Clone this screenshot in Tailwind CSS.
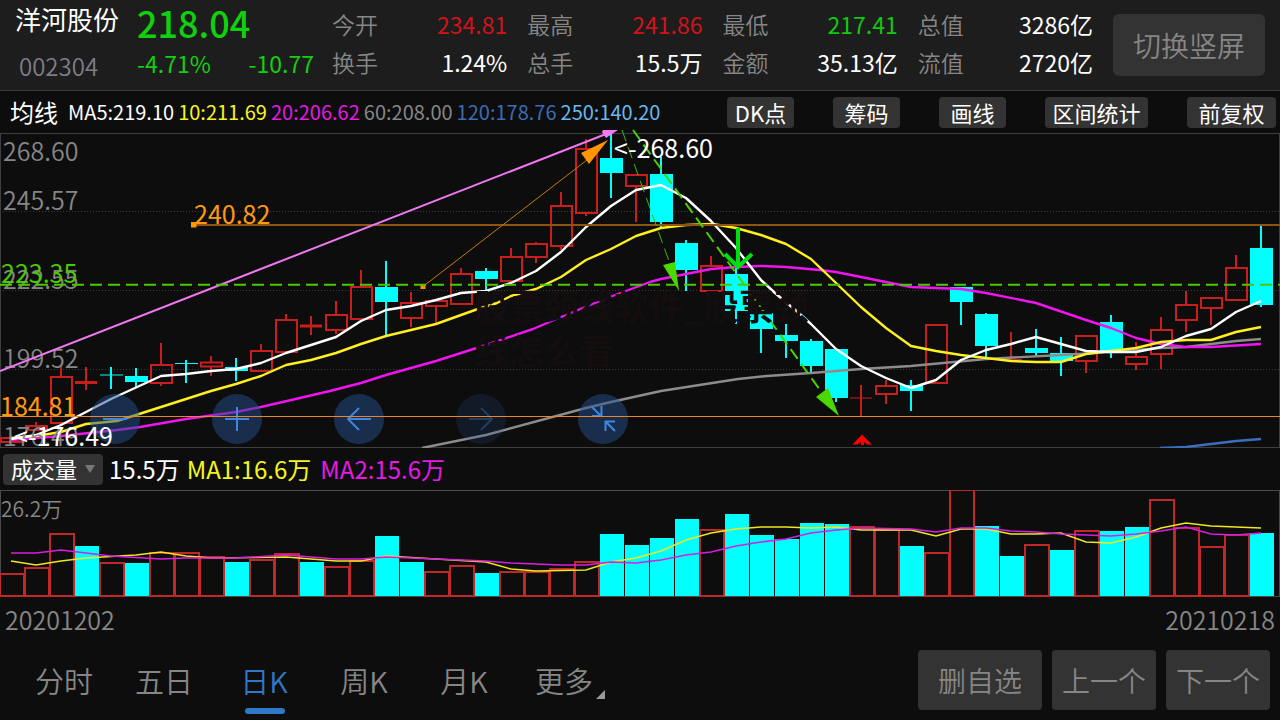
<!DOCTYPE html>
<html lang="zh-CN">
<head>
<meta charset="utf-8">
<meta name="viewport" content="width=device-width, initial-scale=1">
<title>洋河股份 002304</title>
<script src="https://cdn.jsdelivr.net/npm/@tailwindcss/browser@4"></script>
</head>
<body class="min-h-screen bg-[#0d0d0d] font-['Noto_Sans_CJK_SC',sans-serif] text-white overflow-x-hidden">

<header class="flex h-[91px] items-start border-b border-[#3a3a3a] bg-[#1d1d1d] pl-[15px] pr-[15px]">
  <div class="flex w-[122px] flex-col">
    <h1 class="h-[38px] text-[26px] leading-[38px] whitespace-nowrap">洋河股份</h1>
    <p class="pt-2 pl-1 text-2xl leading-10 font-[350] text-[#7d7d88]">002304</p>
  </div>
  <div class="flex w-[177px] flex-col text-[#10d010]">
    <p class="h-11 text-4xl leading-11 font-medium">218.04</p>
    <p class="flex justify-between text-[23px] leading-[38px]"><span>-4.71%</span><span>-10.77</span></p>
  </div>
  <dl class="ml-[18px] mr-5 grid flex-1 grid-cols-4 gap-x-5 pt-[5px] text-[23px] leading-[38px]">
    <div class="flex justify-between"><dt class="font-[350] text-[#868686]">今开</dt><dd class="text-[#d0131b]">234.81</dd></div>
    <div class="flex justify-between"><dt class="font-[350] text-[#868686]">最高</dt><dd class="text-[#d0131b]">241.86</dd></div>
    <div class="flex justify-between"><dt class="font-[350] text-[#868686]">最低</dt><dd class="text-[#10c810]">217.41</dd></div>
    <div class="flex justify-between"><dt class="font-[350] text-[#868686]">总值</dt><dd>3286亿</dd></div>
    <div class="flex justify-between"><dt class="font-[350] text-[#868686]">换手</dt><dd>1.24%</dd></div>
    <div class="flex justify-between"><dt class="font-[350] text-[#868686]">总手</dt><dd>15.5万</dd></div>
    <div class="flex justify-between"><dt class="font-[350] text-[#868686]">金额</dt><dd>35.13亿</dd></div>
    <div class="flex justify-between"><dt class="font-[350] text-[#868686]">流值</dt><dd>2720亿</dd></div>
  </dl>
  <button class="mt-3.5 h-[62px] w-[152px] rounded-md bg-[#333] text-[28px] font-[350] text-[#868686]">切换竖屏</button>
</header>

<main>
  <div class="flex h-[42px] items-center justify-between pl-2.5 pr-1">
    <div class="flex items-center gap-1 text-xl whitespace-nowrap">
      <span class="mr-1.5 text-2xl">均线</span>
      <span>MA5:219.10</span>
      <span class="text-[#f5f51e]">10:211.69</span>
      <span class="text-[#e619e6]">20:206.62</span>
      <span class="text-[#868686]">60:208.00</span>
      <span class="text-[#3c6cb4]">120:178.76</span>
      <span class="text-[#6ab8f0]">250:140.20</span>
    </div>
    <div class="flex gap-[39px] text-[22px] leading-[30px] whitespace-nowrap">
      <button class="h-[31px] w-[67px] rounded bg-[#333]">DK点</button>
      <button class="h-[31px] w-[67px] rounded bg-[#333]">筹码</button>
      <button class="h-[31px] w-[67px] rounded bg-[#333]">画线</button>
      <button class="h-[31px] w-[103px] rounded bg-[#333]">区间统计</button>
      <button class="h-[31px] w-[89px] rounded bg-[#333]">前复权</button>
    </div>
  </div>

  <section class="relative h-[315px] text-[25px] leading-8" aria-label="日K线图">
    <svg id="price" class="absolute inset-0 h-full w-full" viewBox="0 133 1280 315" preserveAspectRatio="none" fill="none">
      <rect x="0.5" y="133.5" width="1279" height="314" stroke="#3f3f3f"/>
      <path d="M0 211.5H1280M0 290.5H1280M0 369.5H1280" stroke="#3c3c3c" stroke-dasharray="1 2"/>
      <g id="candles"></g>
      <g stroke-width="2.4" stroke-linejoin="round">
        <polyline stroke="#8c8c8c" points="422,448 486,435 586,408 611,402 661,391 738,379 767,376 811,373 861,369 911,366 986,359 1061,355 1111,352 1161,348 1186,347 1236,341 1261,339"/>
        <polyline stroke="#3a6fbf" points="1160,448 1186,447 1211,444 1236,441 1261,439"/>
        <polyline stroke="#f015f0" points="11,440 61,436 117,430 140,427 186,419 236,412 261,407 330,391 361,383 386,375 436,361 486,345 533,329 561,317 607,298 650,282 661,279 686,274 711,269 736,267 761,266 786,267 820,270 836,272 886,282 911,287 961,289 986,293 1036,303 1086,320 1111,328 1136,338 1161,344 1186,347 1211,347 1261,344"/>
        <polyline stroke="#fff01e" points="11,438 36,436 61,432 86,424 117,421 136,415 161,407 186,399 211,391 236,384 261,376 286,365 311,360 336,353 361,344 386,336 436,324 475,310 497,303 511,296 536,289 561,277 586,260 611,249 636,236 661,228 686,225 713,224 736,228 761,235 786,244 811,259 836,283 861,307 886,328 911,346 936,351 961,355 986,358 1011,361 1036,362 1061,362 1086,354 1111,351 1136,348 1161,342 1186,340 1211,340 1236,332 1261,327"/>
        <polyline stroke="#fff" points="11,439 36,435 61,425 111,399 161,376 186,374 211,371 236,369 261,363 286,353 336,337 361,321 386,310 411,306 436,300 461,293 486,291 511,283 536,271 561,252 586,227 611,206 636,190 661,185 686,198 711,221 736,248 761,280 775,293 800,314 811,324 836,349 861,366 886,378 911,388 936,380 961,360 986,350 1011,344 1036,337 1061,344 1086,351 1111,352 1136,352 1161,347 1186,336 1211,329 1236,312 1261,301"/>
      </g>
    </svg>

    <p class="absolute top-[1px] left-[3px] font-[350] text-[#868686]">268.60</p>
    <p class="absolute top-[50px] left-[3px] font-[350] text-[#868686]">245.57</p>
    <p class="absolute top-[129px] left-[3px] font-[350] text-[#868686]">222.55</p>
    <p class="absolute top-[208px] left-[3px] font-[350] text-[#868686]">199.52</p>
    <p class="absolute top-[286px] left-[3px] font-[350] text-[#868686]">176.49</p>

    <div class="absolute bottom-1 left-[90px] flex gap-[72px] text-[#3f86e0]">
      <button aria-label="缩小" class="size-[50px] rounded-full bg-[#24508c]/50"><svg viewBox="0 0 50 50" fill="none" stroke="currentColor" stroke-width="2"><path d="M13 25H37"/></svg></button>
      <button aria-label="放大" class="size-[50px] rounded-full bg-[#24508c]/50"><svg viewBox="0 0 50 50" fill="none" stroke="currentColor" stroke-width="2"><path d="M13 25H37M25 13V37"/></svg></button>
      <button aria-label="左移" class="size-[50px] rounded-full bg-[#24508c]/50"><svg viewBox="0 0 50 50" fill="none" stroke="currentColor" stroke-width="2"><path d="M37 25H14M25 14L14 25L25 36"/></svg></button>
      <button aria-label="右移" disabled class="size-[50px] rounded-full bg-[#24508c]/50 opacity-40"><svg viewBox="0 0 50 50" fill="none" stroke="currentColor" stroke-width="2"><path d="M13 25H36M25 14L36 25L25 36"/></svg></button>
      <button aria-label="收起" class="size-[50px] rounded-full bg-[#24508c]/50"><svg viewBox="0 0 50 50" fill="none" stroke="currentColor" stroke-width="2"><path d="M14 13L23 22M23.500 12V22H14M37 37L28 28M27.500 37V27.500H37"/></svg></button>
    </div>

    <svg class="pointer-events-none absolute inset-0 h-full w-full overflow-visible" viewBox="0 133 1280 315" preserveAspectRatio="none" fill="none">
      <path d="M194 225H1280" stroke="#8f5510" stroke-width="2"/>
      <path d="M191 222h5.500v5.500h-5.500zM420.500 284h5v5h-5z" fill="#ff9500"/>
      <path d="M0 416.500H1280" stroke="#e8862a"/>
      <path d="M423 286.500L587 160" stroke="#c97a08"/>
      <path d="M608 140L581 153L589 164Z" fill="#ff9500"/>
      <path d="M0 371L606 134" stroke="#f078f0" stroke-width="2"/>
      <path d="M618 130H603L602 132L606 138Z" fill="#f878f8"/>
      <path d="M0 284.700H1280" stroke="#4bc800" stroke-width="2" stroke-dasharray="12 6"/>
      <path d="M622 130L670 264" stroke="#45b800" stroke-dasharray="12 6"/>
      <path d="M663 265L675 262L679 291ZM816 397L828 388L839 416Z" fill="#4bd800"/>
      <path d="M633 130L820 390" stroke="#4bd000" stroke-width="2" stroke-dasharray="12 6"/>
      <path d="M738 228V266M725 254L738 267L752 254" stroke="#00e010" stroke-width="4"/>
      <path d="M862 434.500L872 444.500H867L864 442V445H861V442L857.500 444.500H852.500Z" fill="#ff0000"/>
    </svg>

    <p class="absolute top-[64px] left-[194px] text-[#ff9a10]">240.82</p>
    <p class="absolute top-[123px] left-px text-[#4bc800]">223.35</p>
    <p class="absolute top-[256px] left-0 text-[#ff9a10]">184.81</p>
    <p class="absolute top-[286px] left-[14px]">&lt;-176.49</p>
    <p class="absolute -top-[2px] left-[614px]">&lt;-268.60</p>
    <p class="absolute top-[149px] left-[474px] w-[336px] text-[35px] leading-[45px] font-bold break-all text-[#140e0e]">股票颈线软件_股票颈线怎么看</p>
  </section>

  <div class="flex h-[42px] items-center pl-[3px] text-2xl whitespace-nowrap">
    <button class="flex h-[31px] w-[100px] items-center gap-2 rounded bg-[#333] pl-2 text-[22px]">成交量<svg class="h-2.5 w-2.5" viewBox="0 0 10 10"><path d="M0 1H10L5 9Z" fill="#777"/></svg></button>
    <span class="ml-1.5">15.5万</span>
    <span class="ml-[7px] text-[#f5f51e]">MA1:16.6万</span>
    <span class="ml-[9px] text-[#e619e6]">MA2:15.6万</span>
  </div>

  <section class="relative h-[107px]" aria-label="成交量">
    <svg class="absolute inset-0 h-full w-full" viewBox="0 490 1280 107" preserveAspectRatio="none" fill="none">
      <rect x="0.5" y="490.5" width="1279" height="106" stroke="#4a4a4a"/>
      <g id="volumes"></g>
      <g stroke-width="1.500">
        <polyline stroke="#f0e81e" points="11,561 36,565 61,561 86,558 136,555 161,552 186,556 211,558 286,557 311,559 336,561 361,561 386,556 436,559 486,562 511,569 536,571 586,570 611,562 636,558 661,551 686,540 711,533 736,529 761,527 786,527 811,528 836,527 861,530 911,530 936,536 961,529 986,529 1011,534 1036,534 1061,533 1086,542 1111,543 1136,537 1161,528 1186,523 1211,526 1261,528"/>
        <polyline stroke="#d81ee0" points="11,553 36,553 61,550 86,553 111,556 161,559 186,558 236,558 286,555 336,559 361,559 386,557 436,559 486,561 511,563 561,565 586,565 611,562 636,563 661,560 686,555 711,552 736,546 761,542 786,539 811,533 836,530 861,528 911,529 936,532 961,528 986,528 1011,531 1036,532 1061,534 1111,536 1136,534 1161,531 1186,527 1211,534 1236,535 1261,533"/>
      </g>
    </svg>
    <p class="absolute top-[3px] left-px text-[21px] font-[350] text-[#868686]">26.2万</p>
  </section>

  <div class="flex justify-between pt-1 pb-2 pl-[5px] pr-[5px] text-[25px] leading-9 font-[350] text-[#868686]">
    <time datetime="2020-12-02">20201202</time><time datetime="2021-02-18">20210218</time>
  </div>
</main>

<nav class="flex items-center justify-between pt-[5px] pr-2.5 pl-3.5 pb-2 text-[#868686]" aria-label="周期">
  <div class="flex text-[29px] leading-[60px] font-[350] whitespace-nowrap">
    <button class="w-[100px]">分时</button>
    <button class="w-[100px]">五日</button>
    <button class="relative w-[100px] text-[#2f78c8]" aria-current="page">日K<span class="absolute -bottom-1 left-[31px] h-1.5 w-10 rounded-full bg-[#2f78c8]"></span></button>
    <button class="w-[100px]">周K</button>
    <button class="w-[100px]">月K</button>
    <button class="relative w-[100px]">更多<svg class="absolute right-[9px] bottom-[11px] size-[9px]" viewBox="0 0 9 9"><path d="M9 0V9H0Z" fill="#999"/></svg></button>
  </div>
  <div class="flex gap-2.5 text-[28px] font-[350]">
    <button class="h-[60px] w-[124px] rounded bg-[#333]">删自选</button>
    <button class="h-[60px] w-[104px] rounded bg-[#333]">上一个</button>
    <button class="h-[60px] w-[104px] rounded bg-[#333]">下一个</button>
  </div>
</nav>

<script>
  // Each candle: direction (1 up, 0 down), body top, body bottom, wick top, wick bottom.
  const candles = [
    [1,438,442,435,446],[1,426,430,422,430],[1,377,423,366,423],[1,381,384,367,390],[0,374.500,375.500,367,389],
    [0,376,382,368,388],[1,365,383,343,386],[0,363,364,360,383],[1,362.500,366.500,356,376],[0,367,371,358,381],
    [1,351,371,344,371],[1,320,352,314,352],[1,324.500,327.500,316,335],[1,315,330,301,334],[1,287,319,270,319],
    [0,287,302,261,335],[1,303,318,292,327],[1,301,306,301,323],[1,274,304,268,304],[0,271,279,268,292],
    [1,257,281,248,281],[1,244,257,242,263],[1,206,246,192,250],[1,149,213,139,216],[0,158,173,133,198],
    [1,175,186,175,222],[0,174,222,157,228],[0,243,270,240,291],[1,266,291,256,291],[0,274,311,268,324],
    [0,313,329,313,353],[0,335,341,324,358],[0,341,366,339,372],[0,349,398,349,402],[1,397.500,398,385,416],
    [1,386,394,380,404],[0,385,391,380,411],[1,325,383,325,383],[0,287,302,287,325],[0,314,346,313,357],
    [1,359,360,332,361],[0,348,353,329,356],[0,353,361,337,376],[1,336,361,336,373],[0,322,352,315,358],
    [1,357,364,342,370],[1,330,354,317,369],[1,305,320,291,332],[1,298,308,298,325],[1,268,300,255,300],
    [0,248,305,224,307]
  ];
  // Positive: rising day (outlined bar). Negative: falling day (filled bar). Value is the bar's top.
  const volumes = [574,568,534,-546,563,-563,553,553,557,-562,560,554,-562,567,561,-536,-562,572,566,-573,572,572,569,562,-534,-545,-538,-519,530,-514,-535,-539,-523,-524,527,530,-546,553,490,-526,-556,545,-550,531,-531,-527,500,528,547,535,-533];

  document.getElementById('candles').innerHTML = candles.map(([up, t, b, hi, lo], i) => {
    const x = 11 + 25 * i;
    if (!up) return `<path d="M${x} ${hi}V${lo}" stroke="#00ffff" stroke-width="2"/><rect x="${x - 11}" y="${t}" width="23" height="${b - t}" fill="#00ffff"/>`;
    if (b - t < 4) return `<path d="M${x} ${hi}V${lo}" stroke="#c81e1e" stroke-width="2"/><rect x="${x - 11}" y="${t}" width="22" height="${Math.max(b - t, 1)}" fill="#c81e1e"/>`;
    return `<path d="M${x} ${hi}V${t}M${x} ${b}V${lo}M${x - 10} ${t}H${x + 11}V${b}H${x - 10}Z" stroke="#c81e1e" stroke-width="2"/>`;
  }).join('');

  document.getElementById('volumes').innerHTML = volumes.map((v, i) => {
    const x = 25 * i, t = Math.abs(v);
    return v < 0
      ? `<rect x="${x}" y="${t}" width="24" height="${596 - t}" fill="#00ffff"/>`
      : `<rect x="${x}" y="${t}" width="24" height="${596 - t}" stroke="#be2828" stroke-width="2"/>`;
  }).join('');
</script>
</body>
</html>
